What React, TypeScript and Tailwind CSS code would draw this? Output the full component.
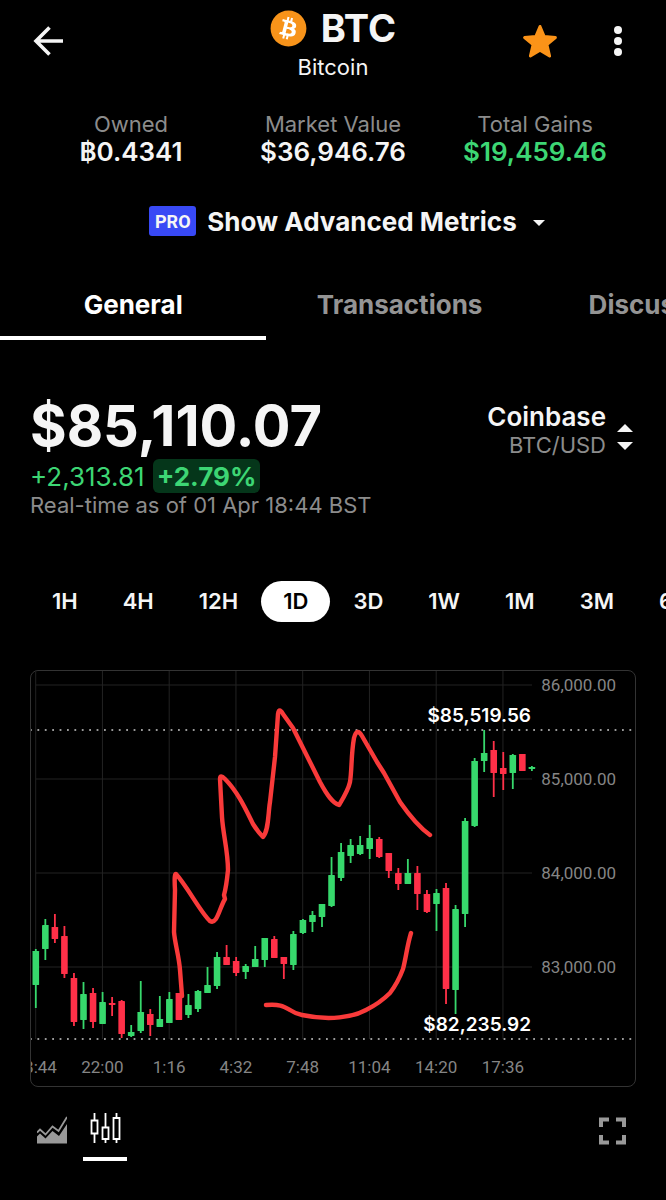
import { useState } from "react";
import { FaBitcoin } from "react-icons/fa";

type Candle = [up: number, high: number, top: number, bottom: number, low: number];

// chart units, one row per candle
const CANDLES: Candle[] = [
  [1, 279, 281, 315, 338],
  [1, 249, 255, 279, 290],
  [0, 244, 257, 269, 273],
  [0, 256, 266, 304, 308],
  [0, 303, 308, 352, 356],
  [1, 312, 324, 350, 359],
  [0, 318, 323, 352, 358],
  [1, 322, 332, 354, 354],
  [0, 327, 333, 335, 346],
  [0, 330, 331, 364, 368],
  [1, 355, 362, 366, 367],
  [1, 311, 342, 361, 363],
  [0, 339, 344, 355, 366],
  [1, 326, 349, 357, 357],
  [1, 322, 329, 353, 353],
  [0, 323, 323, 350, 350],
  [1, 324, 335, 345, 348],
  [1, 320, 321, 339, 342],
  [1, 297, 315, 323, 323],
  [1, 282, 287, 316, 319],
  [0, 275, 287, 295, 295],
  [0, 287, 291, 303, 306],
  [1, 294, 296, 302, 309],
  [1, 276, 289, 297, 297],
  [1, 268, 268, 290, 297],
  [0, 266, 269, 288, 288],
  [0, 287, 287, 294, 309],
  [1, 261, 264, 295, 300],
  [1, 249, 250, 263, 264],
  [1, 241, 245, 252, 262],
  [1, 234, 234, 247, 257],
  [1, 187, 205, 236, 237],
  [1, 173, 182, 208, 211],
  [1, 169, 175, 186, 193],
  [1, 166, 175, 184, 185],
  [1, 155, 168, 179, 189],
  [0, 167, 169, 187, 188],
  [0, 183, 183, 201, 208],
  [0, 198, 203, 214, 220],
  [1, 189, 203, 214, 214],
  [0, 196, 203, 224, 240],
  [0, 220, 224, 242, 243],
  [1, 219, 223, 234, 261],
  [0, 213, 218, 319, 334],
  [1, 235, 239, 320, 344],
  [1, 148, 151, 244, 257],
  [1, 88, 91, 156, 157],
  [1, 60, 83, 91, 102],
  [0, 71, 80, 103, 127],
  [0, 82, 98, 104, 120],
  [1, 84, 85, 103, 119],
  [0, 84, 84, 101, 101],
  [1, 96, 97, 99, 101],
];

const TIMES = ["18:44", "22:00", "1:16", "4:32", "7:48", "11:04", "14:20", "17:36"];
const PRICES = ["86,000.00", "85,000.00", "84,000.00", "83,000.00"];
const PERIODS = ["1H", "4H", "12H", "1D", "3D", "1W", "1M", "3M", "6M"];
const TABS = ["General", "Transactions", "Discussions"];

const STATS = [
  { label: "Owned", value: "฿0.4341", color: "text-[#f5f5f5]" },
  { label: "Market Value", value: "$36,946.76", color: "text-[#f5f5f5]" },
  { label: "Total Gains", value: "$19,459.46", color: "text-[#3dd674]" },
];

function PriceChart() {
  return (
    <svg viewBox="1 1 604 415" className="block w-full" role="img" aria-label="BTC/USD candlestick chart">
      <g stroke="#222222" strokeWidth="1">
        {TIMES.map((t, i) => (
          <line key={t} x1={5.7 + i * 66.75} x2={5.7 + i * 66.75} y1="1" y2="369" />
        ))}
        {PRICES.map((p, i) => (
          <line key={p} x1="6" x2="502" y1={15 + i * 94} y2={15 + i * 94} />
        ))}
      </g>

      <g stroke="#9a9a9a" strokeWidth="1.8" strokeDasharray="1.8 5.6">
        <line x1="0" x2="604" y1="60" y2="60" />
        <line x1="0" x2="604" y1="369" y2="369" />
      </g>

      {CANDLES.map(([up, high, top, bottom, low], i) => {
        const x = 5.8 + i * 9.54;
        return (
          <g key={i} fill={up ? "#37d86c" : "#ff3048"}>
            <rect x={x - 0.9} y={high} width="1.8" height={low - high} />
            <rect x={x - 3.3} y={top} width="6.6" height={bottom - top} rx="0.4" />
          </g>
        );
      })}

      <g className="font-['Roboto',sans-serif] text-[17px]" fill="#858585">
        {PRICES.map((p, i) => (
          <text key={p} x="586" y={21 + i * 94} textAnchor="end">
            {p}
          </text>
        ))}
        {TIMES.map((t, i) => (
          <text key={t} x={5.7 + i * 66.75} y="403" textAnchor="middle">
            {t}
          </text>
        ))}
      </g>

      <g className="text-[19px] font-semibold" fill="#ffffff">
        <text x="501" y="52" textAnchor="end">$85,519.56</text>
        <text x="501" y="361" textAnchor="end">$82,235.92</text>
      </g>

      {/* hand-drawn markup */}
      <g fill="none" stroke="#f93a3a" strokeWidth="4.4" strokeLinecap="round" strokeLinejoin="round">
        <path d="M152 326 L150 300 C149 286 145 274 144 262 L145 220 Q144 203 146 204 C157 216 171 243 180 251 C187 255 189 239 195 229 L194 225 C196 218 197 210 198 200 C198 181 193 164 192 147 L190 109 Q190 104 195 109 C208 122 216 140 223 154 Q228 162 233 167 C239 160 238 143 240 132 L245 87 L248 44 Q249 37 253 44 L263 58 L290 112 C298 127 303 133 309 135 C312 130 318 121 320 112 C322 99 321 85 324 68 Q327 57 332 66 L347 92 L354 103 L370 132 Q386 155 400 165" />
        <path d="M236 335 C250 334 253 336 260 340 Q266 344 272 345 C300 351 323 347 336 340 C346 335 354 329 360 323 C366 315 370 307 373 299 C376 288 377 276 381 263" />
      </g>
    </svg>
  );
}

export default function App() {
  const [tab, setTab] = useState("General");
  const [period, setPeriod] = useState("1D");
  const [chartType, setChartType] = useState("candles");

  return (
    <div className="min-h-screen overflow-hidden bg-black pb-10 font-['Inter',sans-serif] text-[#f5f5f5]">
      <header className="grid grid-cols-[1fr_auto_1fr] px-[30px]">
        <button aria-label="Back" className="flex h-[82px] w-9 items-center justify-center">
          <svg width="32" height="32" viewBox="0 0 32 32" fill="none" stroke="#f5f5f5" strokeWidth="3.6">
            <path d="M31 16 H4 M17.500 2.500 L4 16 L17.500 29.500" />
          </svg>
        </button>
        <div className="pt-2 text-center">
          <h1 className="flex h-10 items-center justify-center gap-[14px] text-[38px] font-bold">
            <span className="rounded-full bg-[radial-gradient(#fff_60%,transparent_62%)]">
              <FaBitcoin className="h-[37px] w-[37px] text-[#f7931a]" />
            </span>
            BTC
          </h1>
          <p className="text-[22px] leading-[38px]">Bitcoin</p>
        </div>
        <div className="flex h-[82px] items-center justify-end gap-[42px]">
          <button aria-label="Favourite">
            <svg width="36" height="36" viewBox="0 0 36 36" fill="#fb9318" stroke="#fb9318" strokeWidth="3" strokeLinejoin="round">
              <path d="M18 3.500 L22.200 13.600 L33.400 14.600 L24.900 21.600 L27.600 33 L18 27.200 L8.400 33 L11.100 21.600 L2.600 14.600 L13.800 13.600 Z" />
            </svg>
          </button>
          <button aria-label="More options" className="flex w-9 justify-center">
            <svg width="8" height="30" viewBox="0 0 8 30" fill="#f5f5f5">
              <circle cx="4" cy="4" r="4" />
              <circle cx="4" cy="15" r="4" />
              <circle cx="4" cy="26" r="4" />
            </svg>
          </button>
        </div>
      </header>

      <dl className="grid grid-cols-3 px-[30px] pt-6 text-center leading-7">
        {STATS.map((s) => (
          <div key={s.label}>
            <dt className="text-[22px] text-[#8c8c8c]">{s.label}</dt>
            <dd className={`text-[26px] font-semibold ${s.color}`}>{s.value}</dd>
          </div>
        ))}
      </dl>

      <button className="mx-auto mt-10 flex h-[30px] items-center pl-7 text-[26px] font-bold">
        <span className="mr-[11px] flex h-[30px] w-[47px] items-center justify-center rounded-[3px] bg-[#3849f5] font-['Liberation_Sans_Narrow','Roboto',sans-serif] text-[18px]">
          PRO
        </span>
        Show Advanced Metrics
        <svg width="12" height="6" viewBox="0 0 12 6" className="mt-1 ml-4" fill="#f5f5f5">
          <path d="M0 0 H12 L6 6 Z" />
        </svg>
      </button>

      <nav className="mt-[34px] flex">
        {TABS.map((t) => (
          <button
            key={t}
            onClick={() => setTab(t)}
            className={`h-[70px] w-2/5 shrink-0 border-b-4 pt-0.5 text-[26px] font-bold ${
              tab === t ? "border-white text-white" : "border-transparent text-[#949494]"
            }`}
          >
            {t}
          </button>
        ))}
      </nav>

      <section className="mt-[53px] flex justify-between pr-[33px] pl-[30px]">
        <div>
          <div className="text-[56px] leading-[66px] font-bold">$85,110.07</div>
          <div className="flex h-[34px] items-center gap-2 text-[26px] text-[#3dd674]">
            +2,313.81
            <span className="flex h-[34px] items-center rounded-md bg-[#05361a] px-1 font-bold">+2.79%</span>
          </div>
          <p className="text-[22px] leading-6 text-[#8c8c8c]">Real-time as of 01 Apr 18:44 BST</p>
        </div>
        <button className="flex items-start gap-[11px] pt-[10px] text-right leading-7">
          <span>
            <span className="block text-[26px] font-semibold">Coinbase</span>
            <span className="block text-[22px] text-[#8c8c8c]">BTC/USD</span>
          </span>
          <svg width="16" height="26" viewBox="0 0 16 26" className="mt-[21px]" fill="#f5f5f5">
            <path d="M0 8 H16 L8 0 Z M0 18 H16 L8 26 Z" />
          </svg>
        </button>
      </section>

      <div className="mt-16 flex gap-px pl-[30px]">
        {PERIODS.map((p) => (
          <button
            key={p}
            onClick={() => setPeriod(p)}
            className={`h-[41px] shrink-0 rounded-full px-[22px] text-[22px] font-semibold ${
              period === p ? "bg-white text-black" : ""
            }`}
          >
            {p}
          </button>
        ))}
      </div>

      <div className="mx-[30px] mt-12 overflow-hidden rounded-lg border border-[#333333]">
        <PriceChart />
      </div>

      <div className="flex h-[74px] items-start gap-[9px] px-[30px] pt-6">
        <button
          aria-label="Area chart"
          onClick={() => setChartType("area")}
          className={`flex h-[50px] w-11 justify-center border-b-4 pt-1 ${
            chartType === "area" ? "border-white text-white" : "border-transparent text-[#999999]"
          }`}
        >
          <svg width="30" height="29" viewBox="0 0 30 29" fill="currentColor">
            <path d="M0 28.500 V21.500 L3 18.500 L8.500 23.500 L15.500 16 L22 21 L30 9 V28.500 Z" />
            <path d="M0 17.500 L3 14.500 L8.500 19.500 L15.500 11.500 L21.500 16 L30 2" fill="none" stroke="currentColor" strokeWidth="1.800" />
          </svg>
        </button>
        <button
          aria-label="Candlestick chart"
          onClick={() => setChartType("candles")}
          className={`flex h-[50px] w-11 justify-center border-b-4 pt-0.5 ${
            chartType === "candles" ? "border-white text-white" : "border-transparent text-[#999999]"
          }`}
        >
          <svg width="31" height="30" viewBox="0 0 31 30" fill="none" stroke="currentColor" strokeWidth="1.800">
            <path d="M4.500 0 V7.500 M1.500 7.500 H7.500 V20.500 H1.500 Z M4.500 20.500 V30" />
            <path d="M15.500 0 V14.500 M12.500 14.500 H18.500 V26 H12.500 Z M15.500 26 V30" />
            <path d="M26.500 0 V5 M23.500 5 H29.500 V26 H23.500 Z M26.500 26 V30" />
          </svg>
        </button>
        <button aria-label="Full screen" className="mt-[6px] mr-[10px] ml-auto">
          <svg width="27" height="28" viewBox="0 0 27 28" fill="none" stroke="#999999" strokeWidth="4">
            <path d="M10 2.500 H2 V10 M17 2.500 H25 V10 M10 25.500 H2 V18 M17 25.500 H25 V18" />
          </svg>
        </button>
      </div>
    </div>
  );
}
